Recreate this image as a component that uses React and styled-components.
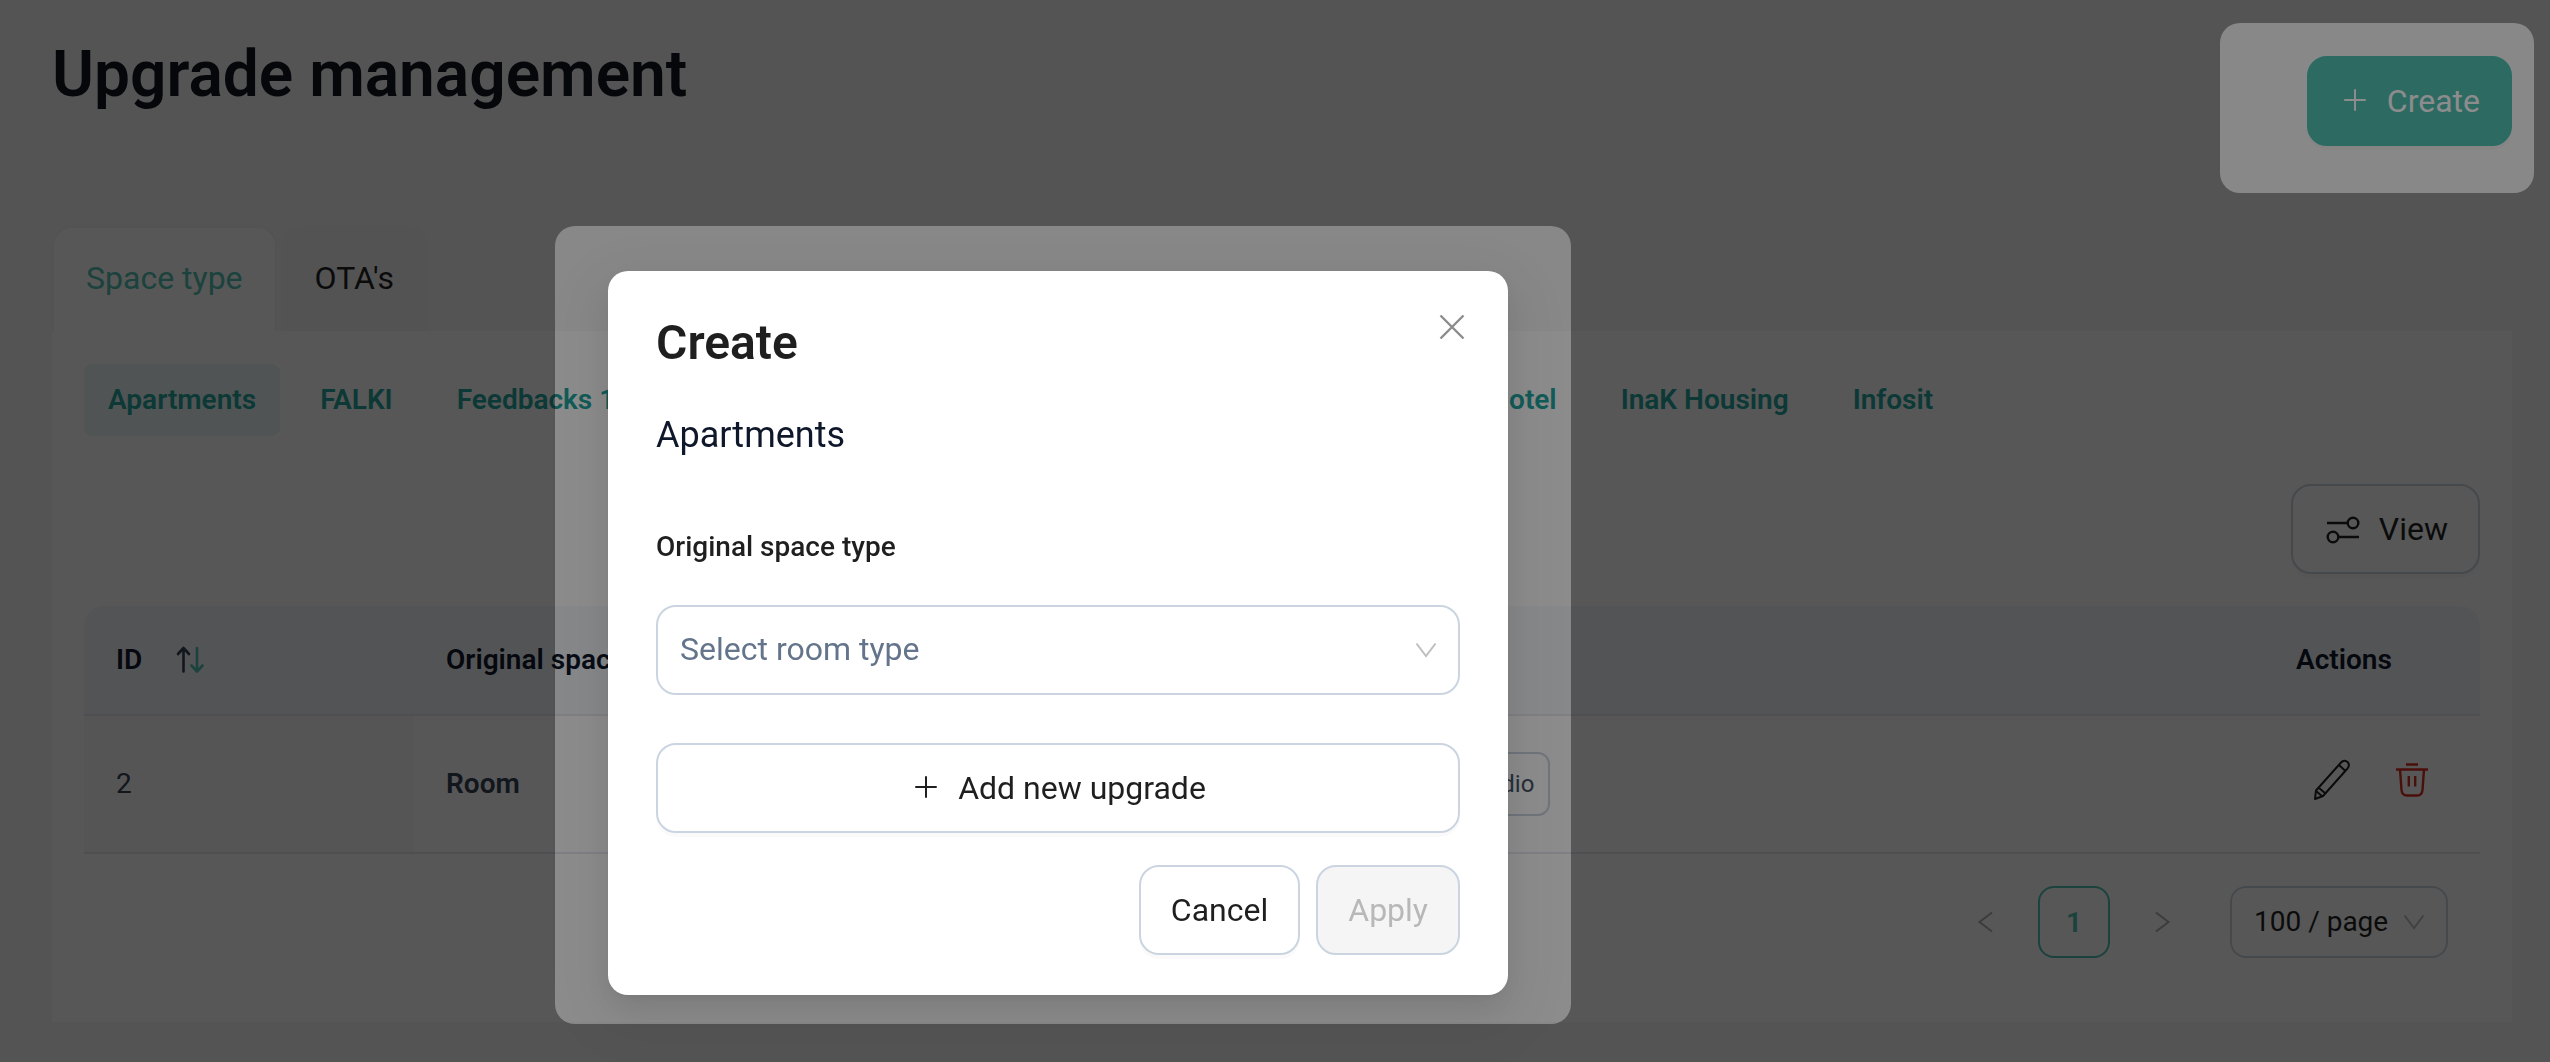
import React, { useState } from "react";
import styled, { createGlobalStyle, css } from "styled-components";

const GlobalStyle = createGlobalStyle`
  *, *::before, *::after {
    box-sizing: border-box;
  }
  body {
    margin: 0;
    background: #f8f8f8;
    font-family: Roboto, "Liberation Sans", sans-serif;
    font-size: 28px;
    line-height: 44px;
    color: #0f172a;
  }
  button, select {
    font-family: inherit;
    margin: 0;
    cursor: pointer;
  }
  h1, h2, p {
    margin: 0;
  }
`;

const Page = styled.main`
  min-height: 100vh;
  padding: 34px 38px 38px 52px;
`;

const Header = styled.header`
  display: flex;
  justify-content: space-between;
  height: 192px;
`;

const Title = styled.h1`
  font-size: 64px;
  line-height: 82px;
  font-weight: 600;
  color: #0d141c;
`;

const Button = styled.button`
  display: inline-flex;
  align-items: center;
  justify-content: center;
  gap: 16px;
  height: 90px;
  padding: 0 30px;
  border: 2px solid #cbd5e1;
  border-radius: 20px;
  background: #fff;
  color: #1f1f1f;
  font-size: 32px;
  box-shadow: 0 4px 0 rgba(0, 0, 0, 0.02);
  &:disabled {
    background: #f5f5f5;
    color: #b8b8b8;
    box-shadow: none;
  }
  ${({ $primary }) =>
    $primary &&
    css`
      margin-top: 22px;
      border-color: #50c1b2;
      background: #50c1b2;
      color: #fff;
    `}
  ${({ $block }) => $block && "width: 100%;"}
`;

const Tabs = styled.nav`
  display: flex;
  gap: 4px;
`;

const Tab = styled.button`
  height: 105px;
  padding: 0 32px 4px;
  border: 2px solid #f2f2f2;
  border-bottom: 0;
  border-radius: 20px 20px 0 0;
  font-size: 32px;
  background: ${({ $active }) => ($active ? "#fff" : "#f3f3f3")};
  color: ${({ $active }) => ($active ? "#50c1b2" : "#1f1f1f")};
`;

const Panel = styled.section`
  padding: 33px 32px 64px;
  background: #fff;
`;

const Hotels = styled.div`
  display: flex;
  gap: 16px;
`;

const Hotel = styled.button`
  height: 72px;
  padding: 0 24px 2px;
  border: 0;
  border-radius: 8px;
  font-size: 28px;
  font-weight: 600;
  white-space: nowrap;
  color: #22a69e;
  background: ${({ $active }) => ($active ? "#edf8f6" : "transparent")};
  ${({ $push }) => $push && "margin-left: 810px;"}
`;

const Toolbar = styled.div`
  display: flex;
  justify-content: flex-end;
  padding: 48px 0 32px;
`;

const Table = styled.table`
  width: 100%;
  table-layout: fixed;
  border-collapse: separate;
  border-spacing: 0;
`;

const Th = styled.th`
  width: ${({ $width }) => $width || "auto"};
  height: 110px;
  padding: 0 32px;
  border-bottom: 2px solid #e8e8f0;
  background: #f5f8fc;
  text-align: left;
  font-weight: 600;
  white-space: nowrap;
  &:first-child {
    border-top-left-radius: 20px;
  }
  &:last-child {
    border-top-right-radius: 20px;
  }
`;

const Td = styled.td`
  height: 138px;
  padding: 0 32px;
  border-bottom: 2px solid #e8e8f0;
  font-weight: ${({ $strong }) => ($strong ? 600 : 400)};
  background: ${({ $sorted }) => ($sorted ? "#fafafa" : "#fff")};
  color: #334155;
`;

const SortLabel = styled.span`
  display: inline-flex;
  align-items: center;
  gap: 32px;
`;

const Chips = styled.div`
  display: flex;
  padding-left: 604px;
`;

const Chip = styled.span`
  height: 64px;
  padding: 0 14px;
  border: 2px solid #cbd5e1;
  border-radius: 12px;
  font-size: 24px;
  line-height: 60px;
  color: #475569;
`;

const Actions = styled.div`
  display: flex;
  gap: 44px;
  padding: 0 0 8px 16px;
`;

const IconButton = styled.button`
  display: flex;
  align-items: center;
  justify-content: center;
  padding: 0;
  border: 0;
  background: transparent;
`;

const Pagination = styled.div`
  display: flex;
  justify-content: flex-end;
  gap: 16px;
  padding: 32px 32px 0 0;
`;

const PageButton = styled.button`
  display: flex;
  align-items: center;
  justify-content: center;
  width: 72px;
  height: 72px;
  padding: 0;
  border: 2px solid ${({ $active }) => ($active ? "#50c1b2" : "transparent")};
  border-radius: 16px;
  background: transparent;
  color: #50c1b2;
  font-size: 28px;
  font-weight: 600;
`;

const SelectBox = styled.div`
  display: grid;
  align-items: center;
  margin-left: ${({ $small }) => ($small ? "16px" : "0")};
  & > * {
    grid-area: 1 / 1;
  }
  svg {
    justify-self: end;
    margin-right: 22px;
    pointer-events: none;
  }
`;

const Select = styled.select`
  appearance: none;
  width: 100%;
  height: ${({ $small }) => ($small ? "72px" : "90px")};
  padding: ${({ $small }) => ($small ? "0 57px 2px 22px" : "0 60px 2px 22px")};
  border: 2px solid #cbd5e1;
  border-radius: ${({ $small }) => ($small ? "16px" : "20px")};
  background: transparent;
  font-size: ${({ $small }) => ($small ? "28px" : "32px")};
  color: ${({ $small }) => ($small ? "#1f1f1f" : "#64748b")};
`;

const Mask = styled.div`
  position: fixed;
  inset: 0;
  background: rgba(0, 0, 0, 0.45);
`;

/* everything outside the two spots gets darker */
const Spotlight = styled.div`
  position: fixed;
  inset: 0;
  background: #9e9e9e;
  mix-blend-mode: multiply;
`;

const Spot = styled.div`
  position: absolute;
  border-radius: 20px;
  background: #fff;
`;

const DialogSpot = styled(Spot)`
  top: 226px;
  left: 555px;
  width: 1016px;
  height: 798px;
`;

const CreateSpot = styled(Spot)`
  top: 23px;
  right: 16px;
  width: 314px;
  height: 170px;
`;

const Overlay = styled.div`
  position: fixed;
  inset: 0;
  display: flex;
  justify-content: center;
  align-items: flex-start;
  padding: 271px 434px 0 0;
`;

const Dialog = styled.div`
  position: relative;
  width: 900px;
  padding: 40px 48px;
  border-radius: 20px;
  background: #fff;
  box-shadow: 0 12px 32px rgba(0, 0, 0, 0.08), 0 6px 12px -8px rgba(0, 0, 0, 0.12),
    0 18px 56px 16px rgba(0, 0, 0, 0.05);
`;

const DialogTitle = styled.h2`
  font-size: 48px;
  line-height: 64px;
  font-weight: 600;
  color: #1f1f1f;
`;

const Close = styled(IconButton)`
  position: absolute;
  top: 34px;
  right: 34px;
  width: 44px;
  height: 44px;
`;

const Property = styled.p`
  margin-top: 38px;
  font-size: 36px;
`;

const Label = styled.label`
  display: block;
  margin: 68px 0 36px;
  font-weight: 500;
  color: #1f1f1f;
`;

const AddRow = styled.div`
  margin: 48px 0 32px;
`;

const Footer = styled.div`
  display: flex;
  justify-content: flex-end;
  gap: 16px;
`;

const PlusIcon = () => (
  <svg width="32" height="32" viewBox="0 0 32 32" stroke="currentColor" strokeWidth="2" strokeLinecap="round">
    <path d="M6 15h20M16 5v20" />
  </svg>
);

const CloseIcon = () => (
  <svg width="28" height="28" viewBox="0 0 28 28" stroke="#8c8c8c" strokeWidth="2.4">
    <path d="M2.500 2.500l23 23M25.500 2.500l-23 23" />
  </svg>
);

const DownIcon = () => (
  <svg width="24" height="24" viewBox="0 0 24 24" fill="none" stroke="#bfbfbf" strokeWidth="2">
    <path d="M2.500 5.500L12 18L21.500 5.500" />
  </svg>
);

const ArrowIcon = ({ next }) => (
  <svg width="24" height="24" viewBox="0 0 24 24" fill="none" stroke="#b0b0b0" strokeWidth="2">
    <path d={next ? "M6 2.500L18.500 12L6 21.500" : "M18 2.500L5.500 12L18 21.500"} />
  </svg>
);

const ViewIcon = () => (
  <svg width="40" height="32" viewBox="0 0 40 32" fill="none" stroke="currentColor" strokeWidth="2.4">
    <circle cx="30" cy="10" r="5.300" />
    <circle cx="10" cy="24" r="5.300" />
    <path d="M4 10h20.500M15.500 24h20.500" />
  </svg>
);

const SortIcon = () => (
  <svg width="30" height="30" viewBox="0 0 30 30" fill="none" strokeWidth="2.600" strokeLinecap="round" strokeLinejoin="round">
    <path d="M9.500 26.500V3M4 9L9.500 3L15 9" stroke="#334155" />
    <path d="M23 3V26.500M17.500 20.500L23 26.500L28.500 20.500" stroke="#50c1b2" />
  </svg>
);

const PencilIcon = () => (
  <svg width="40" height="44" viewBox="0 0 40 44" fill="none" stroke="#1f1f1f" strokeWidth="2" strokeLinejoin="round">
    <path d="M3 41L4 32.500L29 4.500C31 2.500 33.500 2 35.500 4C37.500 6 37 8.500 35.500 10.500L11 38Z" />
    <path d="M27 7L33.500 13M7 30L13.500 35.500M4 33L10.500 38.500" />
  </svg>
);

const TrashIcon = () => (
  <svg width="32" height="36" viewBox="0 0 32 36" fill="none" stroke="#d92d20" strokeWidth="2.400">
    <path d="M10 2.500H22M0 7.500H32M4 7.500L5.500 28C5.800 31.500 7.500 33.500 11 33.500H21C24.500 33.500 26.200 31.500 26.500 28L28 7.500M12.800 14V24.500M19.200 14V24.500" />
  </svg>
);

const App = () => {
  const [roomType, setRoomType] = useState("");

  return (
    <>
      <GlobalStyle />
      <Page>
        <Header>
          <Title>Upgrade management</Title>
          <Button $primary>
            <PlusIcon />
            Create
          </Button>
        </Header>
        <Tabs>
          <Tab $active>Space type</Tab>
          <Tab>OTA's</Tab>
        </Tabs>
        <Panel>
          <Hotels>
            <Hotel $active>Apartments</Hotel>
            <Hotel>FALKI</Hotel>
            <Hotel>Feedbacks 1</Hotel>
            <Hotel $push>Hotel</Hotel>
            <Hotel>InaK Housing</Hotel>
            <Hotel>Infosit</Hotel>
          </Hotels>
          <Toolbar>
            <Button>
              <ViewIcon />
              View
            </Button>
          </Toolbar>
          <Table>
            <thead>
              <tr>
                <Th $width="330px">
                  <SortLabel>
                    ID
                    <SortIcon />
                  </SortLabel>
                </Th>
                <Th $width="400px">Original space type</Th>
                <Th />
                <Th $width="216px">Actions</Th>
              </tr>
            </thead>
            <tbody>
              <tr>
                <Td $sorted>2</Td>
                <Td $strong>Room</Td>
                <Td>
                  <Chips>
                    <Chip>Studio</Chip>
                  </Chips>
                </Td>
                <Td>
                  <Actions>
                    <IconButton aria-label="Edit">
                      <PencilIcon />
                    </IconButton>
                    <IconButton aria-label="Delete">
                      <TrashIcon />
                    </IconButton>
                  </Actions>
                </Td>
              </tr>
            </tbody>
          </Table>
          <Pagination>
            <PageButton aria-label="Previous page">
              <ArrowIcon />
            </PageButton>
            <PageButton $active>1</PageButton>
            <PageButton aria-label="Next page">
              <ArrowIcon next />
            </PageButton>
            <SelectBox $small>
              <Select $small aria-label="Page size">
                <option>100 / page</option>
              </Select>
              <DownIcon />
            </SelectBox>
          </Pagination>
        </Panel>
      </Page>
      <Mask />
      <Spotlight>
        <DialogSpot />
        <CreateSpot />
      </Spotlight>
      <Overlay>
        <Dialog role="dialog" aria-labelledby="dialog-title">
          <DialogTitle id="dialog-title">Create</DialogTitle>
          <Close aria-label="Close">
            <CloseIcon />
          </Close>
          <Property>Apartments</Property>
          <Label htmlFor="room-type">Original space type</Label>
          <SelectBox>
            <Select id="room-type" value={roomType} onChange={(e) => setRoomType(e.target.value)}>
              <option value="">Select room type</option>
            </Select>
            <DownIcon />
          </SelectBox>
          <AddRow>
            <Button $block>
              <PlusIcon />
              Add new upgrade
            </Button>
          </AddRow>
          <Footer>
            <Button>Cancel</Button>
            <Button disabled>Apply</Button>
          </Footer>
        </Dialog>
      </Overlay>
    </>
  );
};

export default App;
